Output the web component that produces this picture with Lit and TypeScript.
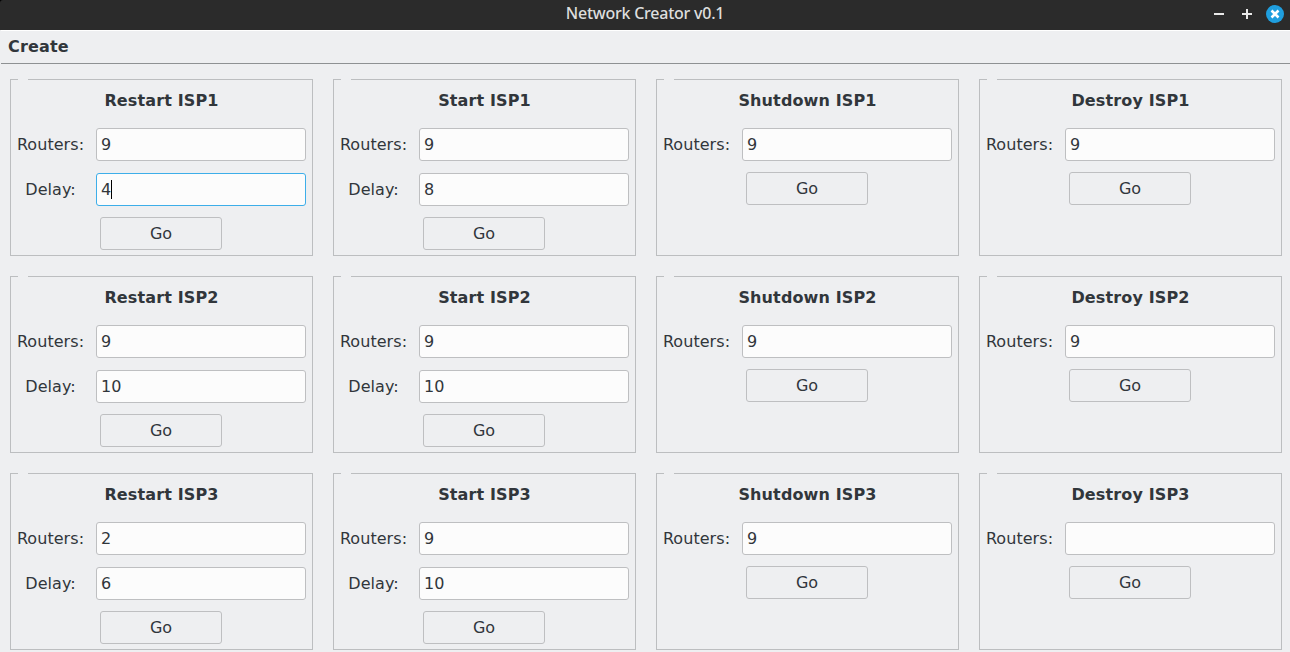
import { LitElement, html, css, nothing } from "lit";
import { customElement, property } from "lit/decorators.js";
import { classMap } from "lit/directives/class-map.js";

interface Field {
  label: string;
  value: string;
  focused?: boolean;
}

interface Panel {
  title: string;
  fields: Field[];
}

const panel = (title: string, routers: string, delay?: string, focused = false): Panel => ({
  title,
  fields: [
    { label: "Routers:", value: routers },
    ...(delay === undefined ? [] : [{ label: "Delay:", value: delay, focused }]),
  ],
});

const PANELS: Panel[] = [
  panel("Restart ISP1", "9", "4", true),
  panel("Start ISP1", "9", "8"),
  panel("Shutdown ISP1", "9"),
  panel("Destroy ISP1", "9"),
  panel("Restart ISP2", "9", "10"),
  panel("Start ISP2", "9", "10"),
  panel("Shutdown ISP2", "9"),
  panel("Destroy ISP2", "9"),
  panel("Restart ISP3", "2", "6"),
  panel("Start ISP3", "9", "10"),
  panel("Shutdown ISP3", "9"),
  panel("Destroy ISP3", ""),
];

@customElement("isp-panel")
export class IspPanel extends LitElement {
  @property({ attribute: false }) panel!: Panel;

  static styles = css`
    :host {
      display: block;
      position: relative;
      box-sizing: border-box;
      height: 177px;
      border: 1px solid #bcbec0;
      padding: 0 6px;
    }
    .notch {
      position: absolute;
      top: -1px;
      left: 7px;
      width: 10px;
      height: 1px;
      background: #eeeff1;
    }
    .title {
      font-size: 16px;
      font-weight: bold;
      line-height: 20px;
      letter-spacing: 0.13px;
      margin: 11px 0 17px;
      text-align: center;
    }
    .row {
      display: grid;
      grid-template-columns: 67px 210px;
      column-gap: 12px;
      align-items: center;
      margin-bottom: 12px;
    }
    .row:last-of-type {
      margin-bottom: 11px;
    }
    .label {
      justify-self: center;
      margin: 0 -4px;
      letter-spacing: 0.06px;
      white-space: nowrap;
    }
    .field {
      display: flex;
      align-items: center;
      box-sizing: border-box;
      height: 33px;
      padding-left: 4px;
      border: 1px solid #bebfc1;
      border-radius: 3px;
      background: #fcfcfc;
    }
    .field.focused {
      border-color: #3daee9;
    }
    .caret {
      width: 1px;
      height: 19px;
      background: #000;
    }
    .go {
      display: block;
      box-sizing: border-box;
      width: 122px;
      height: 33px;
      margin: 0 0 0 83px;
      padding: 0;
      border: 1px solid #bebfc1;
      border-radius: 3px;
      background: #eeeff1;
      font: inherit;
      color: inherit;
    }
  `;

  render() {
    const { title, fields } = this.panel;
    return html`
      <span class="notch"></span>
      <h2 class="title">${title}</h2>
      ${fields.map(
        (f) => html`<div class="row">
          <span class="label">${f.label}</span>
          <div class=${classMap({ field: true, focused: !!f.focused })}>
            <span>${f.value}</span>${f.focused ? html`<span class="caret"></span>` : nothing}
          </div>
        </div>`
      )}
      <button class="go">Go</button>
    `;
  }
}

@customElement("app-root")
export class AppRoot extends LitElement {
  static styles = css`
    :host {
      display: block;
      height: 652px;
      overflow: hidden;
      background: #eeeff1;
      color: #31363b;
      font: 16px/19px "DejaVu Sans", sans-serif;
    }
    .titlebar {
      display: grid;
      grid-template-columns: 1fr auto 1fr;
      align-items: center;
      height: 30px;
      background: #2b2b2b;
      border-top-left-radius: 3px;
    }
    .frame {
      background: #000;
    }
    .caption {
      grid-column: 2;
      font: 500 16px/20px "Noto Sans", sans-serif;
      letter-spacing: -0.24px;
      color: #dedede;
      padding-bottom: 5px;
    }
    .controls {
      justify-self: end;
      display: block;
    }
    .menubar {
      box-sizing: border-box;
      height: 34px;
      margin-left: 1px;
      padding: 6px 7px 0;
      border-top: 1px solid #fff;
      border-bottom: 1px solid #8e9193;
      font-weight: bold;
      letter-spacing: 0.15px;
    }
    .panels {
      display: grid;
      grid-template-columns: repeat(4, 303px);
      gap: 20px;
      padding: 15px 0 0 10px;
    }
  `;

  render() {
    return html`
      <div class="frame">
        <header class="titlebar">
          <span class="caption">Network Creator v0.1</span>
          <svg class="controls" width="90" height="30" viewBox="0 0 90 30">
            <path d="M14 14h10M42 14h10M47 9v10" stroke="#e8e8e8" stroke-width="2" />
            <circle cx="75" cy="14" r="9" fill="#1f9ede" />
            <path d="M71.5 10.5l7 7M78.5 10.5l-7 7" stroke="#fff" stroke-width="2.6" />
          </svg>
        </header>
      </div>
      <nav class="menubar">Create</nav>
      <main class="panels">
        ${PANELS.map((p) => html`<isp-panel .panel=${p}></isp-panel>`)}
      </main>
    `;
  }
}
